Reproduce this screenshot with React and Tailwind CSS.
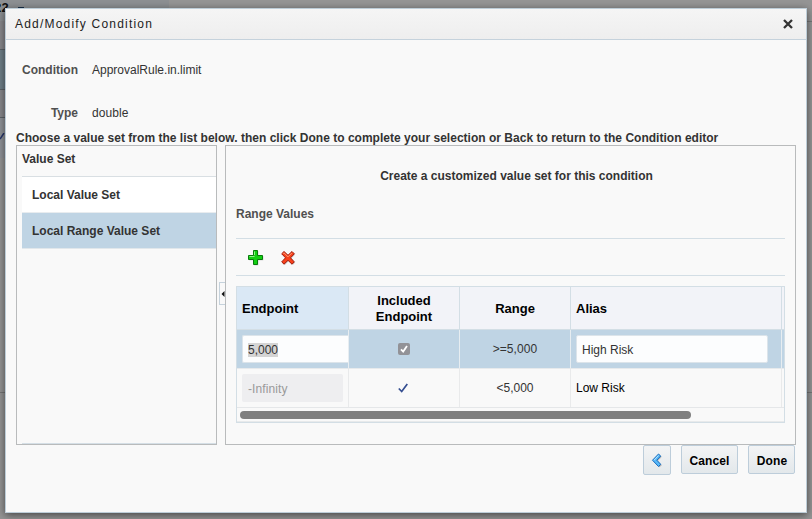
import React from "react";

const columns = "grid grid-cols-[112px_111px_111px_211px_2px]";

function Backdrop() {
  return (
    <div className="absolute inset-0 bg-[#959595]">
      <div className="h-[21px] w-[169px] bg-[#8d9093] flex items-start">
        <span className="-ml-[8px] text-[13px] leading-[16px] font-bold text-[#111]">R2</span>
        <span className="mt-[7px] ml-[9px] w-[6px] h-[2px] bg-[#18304a]" />
      </div>
      <div className="w-full h-[372px] flex justify-between">
        <div className="w-[6px]">
          <div className="h-[29px] bg-[#88888c] border-b border-[#5d6368]" />
          <div className="h-[40px] bg-[#6f7f88] border-b border-[#5d6368]" />
          <div className="h-[28px] bg-[#88888c] border-b border-[#5d6368]" />
          <div className="h-[40px] bg-[#909398] pt-[15px]">
            <svg width="5" height="8" viewBox="0 0 5 8"><path d="M0 6 4 0" stroke="#26346a" strokeWidth="1.5" /></svg>
          </div>
          <div className="h-[235px] border-b border-[#777]" />
        </div>
        <div className="w-[6px] border-y border-[#777]" />
      </div>
    </div>
  );
}

function Plus() {
  return (
    <svg width="17" height="17" viewBox="0 0 17 17">
      <path d="M6.500 1.500h4v5h5v4h-5v5h-4v-5h-5v-4h5z" fill="#777" opacity=".45" transform="translate(.8 .8)" />
      <path d="M6.500 1.500h4v5h5v4h-5v5h-4v-5h-5v-4h5z" fill="#12cf12" stroke="#087a0c" strokeLinejoin="round" />
      <path d="M7.500 6V2.500M2.500 7.500h5" stroke="#8df48a" fill="none" />
    </svg>
  );
}

function Delete() {
  return (
    <svg width="16" height="16" viewBox="0 0 16 16">
      <path d="M4 1.500 8 5.300 12 1.500 14.300 3.800 10.500 7.800 14.300 11.900 12 14.200 8 10.300 4 14.200 1.700 11.900 5.500 7.800 1.700 3.800z" fill="#777" opacity=".4" transform="translate(.8 .7)" />
      <path d="M4 1.500 8 5.300 12 1.500 14.300 3.800 10.500 7.800 14.300 11.900 12 14.200 8 10.300 4 14.200 1.700 11.900 5.500 7.800 1.700 3.800z" fill="#f8411b" stroke="#a01909" strokeLinejoin="round" />
      <path d="M3 3.800 4 2.800 8 6.800 12 2.800" stroke="#ff9c78" fill="none" />
    </svg>
  );
}

function BackArrow() {
  return (
    <svg width="12" height="15" viewBox="0 0 12 15">
      <path d="M7.500 1 1.500 7.200 7.500 13.500 10 11.500 6 7.200 10 3z" fill="#666" opacity=".45" transform="translate(.8 .8)" />
      <path d="M7.500 1 1.500 7.200 7.500 13.500 9.700 11.300 5.800 7.200 9.700 3z" fill="#58b9f8" stroke="#176cc0" strokeLinejoin="round" />
      <path d="M7.500 2.500 3 7.200" stroke="#b8e7ff" />
    </svg>
  );
}

function SmallCheck() {
  return (
    <svg width="12" height="12" viewBox="0 0 12 12" fill="none">
      <path d="M3 6.300 5.200 8.600 9 3" stroke="#fff" strokeWidth="1.800" />
    </svg>
  );
}

function Check() {
  return (
    <svg width="12" height="12" viewBox="0 0 12 12" fill="none">
      <path d="M1.800 6.500 4.700 9.500 10.300 2" stroke="#354e91" strokeWidth="1.700" />
    </svg>
  );
}

function ValueSets() {
  return (
    <section className="w-[201px] h-[300px] border border-[#b9bbbc] pl-[5px] flex flex-col text-[12px] font-bold text-[#333]">
      <h2 className="h-[30px] leading-[26px]">Value Set</h2>
      <div className="h-[37px] border-y border-[#d9dfe3] border-b-[#e8ecef] bg-white pl-[10px] leading-[36px]">Local Value Set</div>
      <div className="h-[36px] border-b border-[#e1e7eb] bg-[#bfd4e4] pl-[10px] leading-[36px]">Local Range Value Set</div>
      <div className="mt-auto h-px bg-[#d5dfe6]" />
    </section>
  );
}

function RangeTable() {
  return (
    <div className="mt-[10px] h-[137px] w-[549px] border border-[#d3dee5] text-[12px] text-[#333]">
      <div className={columns + " h-[43px] border-b border-[#d3dee5] bg-[#f2f3f8] font-bold text-[13px] text-black *:border-r *:border-[#d3dee5]"}>
        <div className="bg-[#dae8f5] pl-[5px] pt-px flex items-center">Endpoint</div>
        <div className="text-center leading-[16px] pt-px flex items-center justify-center">Included<br />Endpoint</div>
        <div className="pt-px flex items-center justify-center">Range</div>
        <div className="pl-[5px] pt-px flex items-center">Alias</div>
        <div className="border-r-0!" />
      </div>
      <div className={columns + " h-[39px] border-b border-[#e7eaec] bg-[#bfd4e4] *:border-r *:border-[#e7edf1]"}>
        <div className="pl-[5px] pt-[5px]">
          <div className="h-[28px] rounded-l-[2px] border border-r-0 border-[#dce4ea] bg-[#fcfdfe] pl-[5px] pt-px flex items-center"><span className="bg-[#d4d4d4] leading-[14px]">5,000</span></div>
        </div>
        <div className="flex items-center justify-center"><span className="size-[12px] rounded-[2px] bg-[#929297] flex items-center justify-center"><SmallCheck /></span></div>
        <div className="flex items-center justify-center tracking-[0.1px]">&gt;=5,000</div>
        <div className="pl-[5px] pt-[5px]"><div className="h-[28px] w-[192px] rounded-[2px] border border-[#dce4ea] bg-[#fcfdfe] pl-[5px] pt-[2px] flex items-center">High Risk</div></div>
        <div className="border-r-0!" />
      </div>
      <div className={columns + " h-[39px] border-b border-[#e5e7e9] *:border-r *:border-[#e9eaeb]"}>
        <div className="pl-[5px] pt-[5px]"><div className="h-[28px] w-[101px] rounded-[2px] bg-[#eeeef0] pl-[6px] leading-[30px] tracking-[0.1px] text-[#999]">-Infinity</div></div>
        <div className="flex items-center justify-center pr-[3px]"><Check /></div>
        <div className="flex items-center justify-center">&lt;5,000</div>
        <div className="pl-[5px] flex items-center text-black">Low Risk</div>
        <div className="border-r-0!" />
      </div>
      <div className="h-[14px] pt-[3px] pl-[3px] border-b border-[#e8eaeb]"><div className="w-[451px] h-[8px] rounded-full bg-[#7f7f7f]" /></div>
    </div>
  );
}

function ValueEditor() {
  return (
    <section className="w-[571px] h-[300px] border border-[#b9bbbc] pl-[10px] pr-[10px] flex flex-col text-[12px] font-bold">
      <h2 className="h-[58px] pl-[12px] leading-[60px] text-center text-[#333]">Create a customized value set for this condition</h2>
      <h3 className="h-[34px] leading-[20px] text-[#505050]">Range Values</h3>
      <div className="h-[38px] w-[549px] border-y border-[#d3dee5] flex items-center pl-[11px] gap-[15.5px]"><Plus /><div className="pt-px"><Delete /></div></div>
      <div className="font-normal"><RangeTable /></div>
    </section>
  );
}

function Splitter() {
  return (
    <div className="w-[8px] flex items-end">
      <div className="mb-[140px] ml-[2px] h-[23px] w-[6px] border border-r-0 border-[#c5d2dc] flex items-center justify-end">
        <svg width="4" height="6" viewBox="0 0 4 6"><path d="M3.500 0v6L0.500 3z" fill="#111" /></svg>
      </div>
    </div>
  );
}

export default function App() {
  const button = "rounded-[2px] border border-[#bdcdda] bg-linear-to-b from-[#f3f4f5] to-[#e3e8eb]";
  return (
    <div className="relative h-[519px] w-[812px] overflow-hidden font-['Liberation_Sans',Arial,sans-serif]">
      <Backdrop />
      <main className="absolute left-[5px] top-[8px] h-[505px] w-[802px] border border-[#bdcdd8] bg-[#f9f9f9] shadow-[0_2px_8px_rgba(0,0,0,0.55)] flex flex-col">
        <header className="h-[31px] shrink-0 border-b border-[#c5d2dc] bg-linear-to-b from-[#f5f5f5] to-[#eeeeee] flex items-center justify-between pl-[9px] pr-[13px] text-[12px] text-[#222]">
          <h1 className="tracking-[1.200px]">Add/Modify Condition</h1>
          <svg width="10" height="10" viewBox="0 0 10 10"><path d="m1 1 8 8m0-8L1 9" stroke="#333" strokeWidth="2.300" /></svg>
        </header>
        <dl className="h-[88px] pt-[20px] grid grid-cols-[72px_1fr] gap-x-[14px] auto-rows-[43px] text-[12px] leading-[21px] text-[#333]">
          <dt className="text-right font-bold text-[#505050]">Condition</dt><dd>ApprovalRule.in.limit</dd>
          <dt className="text-right font-bold text-[#505050]">Type</dt><dd className="tracking-[0.1px]">double</dd>
        </dl>
        <p className="h-[17px] pl-[10px] leading-[21px] whitespace-nowrap text-[12px] font-bold text-[#333] tracking-[0.016px]">Choose a value set from the list below. then click Done to complete your selection or Back to return to the Condition editor</p>
        <div className="pl-[10px] flex"><ValueSets /><Splitter /><ValueEditor /></div>
        <footer className="flex justify-end pr-[11px] text-[12px] font-bold text-black">
          <button className={button + " h-[30px] w-[28px] flex items-center justify-center"}><BackArrow /></button>
          <button className={button + " ml-[10px] h-[29px] w-[57px] pt-[3px] tracking-[0.1px]"}>Cancel</button>
          <button className={button + " ml-[10px] h-[29px] w-[47px] pt-[3px] pl-px tracking-[0.1px]"}>Done</button>
        </footer>
      </main>
    </div>
  );
}
